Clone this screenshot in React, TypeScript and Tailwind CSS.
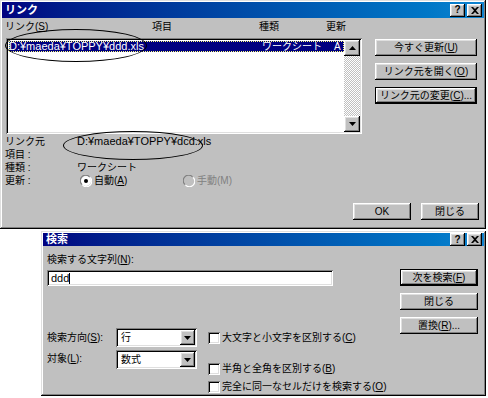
const raised =
  "bg-[#c0c0c0] shadow-[inset_-1px_-1px_#000,inset_1px_1px_#fff,inset_-2px_-2px_#808080,inset_2px_2px_#dfdfdf]";
const sunken =
  "bg-white shadow-[inset_1px_1px_#808080,inset_-1px_-1px_#fff,inset_2px_2px_#000,inset_-2px_-2px_#dfdfdf]";
const frame =
  "bg-[#c0c0c0] shadow-[inset_-1px_-1px_#000,inset_1px_1px_#dfdfdf,inset_-2px_-2px_#808080,inset_2px_2px_#fff]";

const TitleBar = ({ title }: { title: string }) => (
  <div className="h-[16px] flex items-center justify-between pl-[3px] pr-[2px] bg-linear-to-r from-[#000080] to-[#1084d0]">
    <span className="text-white font-bold text-[11px] leading-none">{title}</span>
    <div className="flex gap-[2px]">
      <div className={`w-[15px] h-[13px] flex items-center justify-center ${raised}`}>
        <span className="font-bold text-[10px] leading-none text-black">?</span>
      </div>
      <div className={`w-[15px] h-[13px] flex items-center justify-center ${raised}`}>
        <svg width="8" height="7" viewBox="0 0 8 7">
          <path d="M0 0h2l2 2 2-2h2L5 3.5 8 7H6L4 5 2 7H0l3-3.5z" fill="#000" />
        </svg>
      </div>
    </div>
  </div>
);

const Btn = ({
  children,
  className = "",
  def = false,
}: {
  children: React.ReactNode;
  className?: string;
  def?: boolean;
}) =>
  def ? (
    <div className={`border border-black ${className}`}>
      <div className={`h-full flex items-center justify-center whitespace-nowrap ${raised}`}>{children}</div>
    </div>
  ) : (
    <div className={`flex items-center justify-center whitespace-nowrap ${raised} ${className}`}>{children}</div>
  );

const Radio = ({ checked, disabled }: { checked?: boolean; disabled?: boolean }) => (
  <svg width="12" height="12" viewBox="0 0 12 12">
    <circle cx="6" cy="6" r="5" fill={disabled ? "#c0c0c0" : "#fff"} />
    <path d="M1.8 9.5A5.2 5.2 0 0 1 9.5 1.8" stroke="#808080" strokeWidth="1.2" fill="none" />
    <path d="M2.5 10.2A5.2 5.2 0 0 0 10.2 2.5" stroke="#fff" strokeWidth="1.2" fill="none" />
    {checked && <circle cx="6" cy="6" r="2" fill="#000" />}
  </svg>
);

const Check = () => <div className={`w-[12px] h-[12px] shrink-0 ${sunken}`} />;

const Arrow = ({ up }: { up?: boolean }) => (
  <svg width="7" height="4" viewBox="0 0 7 4">
    <path d={up ? "M0 4h7L3.5 0z" : "M0 0h7L3.5 4z"} fill="#000" />
  </svg>
);

const Select = ({ value }: { value: string }) => (
  <div className={`w-[81px] h-[19px] flex items-center p-[2px] ${sunken}`}>
    <span className="flex-1 pl-[3px] leading-none">{value}</span>
    <div className={`w-[15px] h-full flex items-center justify-center ${raised}`}>
      <Arrow />
    </div>
  </div>
);

export default function App() {
  return (
    <div className="relative w-[488px] h-[398px] bg-white overflow-hidden text-black text-[10px] font-['Liberation_Sans','Noto_Sans_CJK_JP',sans-serif]">
      {/* リンク dialog */}
      <div className={`w-[486px] h-[229px] p-[2px] flex flex-col ${frame}`}>
        <TitleBar title="リンク" />
        <div className="flex">
          <div className="w-[357px] pl-[3px]">
            <div className="h-[17px] flex items-center">
              <span className="w-[147px]">
                リンク(<u>S</u>)
              </span>
              <span className="w-[107px]">項目</span>
              <span className="w-[67px]">種類</span>
              <span>更新</span>
            </div>
            <div className={`ml-[1px] mt-[3px] w-[356px] h-[96px] p-[2px] flex ${sunken}`}>
              <div className="flex-1 pt-[1px] pl-[1px]">
                <div className="h-[11px] flex items-center bg-[#000080] text-white outline-1 outline-dotted outline-[#ffff80] -outline-offset-1">
                  <span className="w-[253px] text-[11px] leading-none">D:¥maeda¥TOPPY¥ddd.xls</span>
                  <span className="w-[72px] leading-none">ワークシート</span>
                  <span className="leading-none">A</span>
                </div>
              </div>
              <div className="w-[16px] flex flex-col bg-[repeating-conic-gradient(#c0c0c0_0_25%,#fff_0_50%)] bg-[length:2px_2px]">
                <div className={`h-[16px] flex items-center justify-center ${raised}`}>
                  <Arrow up />
                </div>
                <div className="flex-1" />
                <div className={`h-[16px] flex items-center justify-center ${raised}`}>
                  <Arrow />
                </div>
              </div>
            </div>
            <div className="mt-[1px] flex flex-col">
              <div className="h-[13px] flex items-center">
                <span className="w-[72px]">リンク元</span>
                <span className="text-[11px]">D:¥maeda¥TOPPY¥dcd.xls</span>
              </div>
              <div className="h-[13px] flex items-center">
                <span className="w-[72px]">項目 :</span>
              </div>
              <div className="h-[13px] flex items-center">
                <span className="w-[72px]">種類 :</span>
                <span>ワークシート</span>
              </div>
              <div className="h-[13px] flex items-center">
                <span className="w-[75px]">更新 :</span>
                <Radio checked />
                <span className="ml-[2px] w-[89px]">
                  自動(<u>A</u>)
                </span>
                <Radio disabled />
                <span className="ml-[2px] text-[#808080]">手動(M)</span>
              </div>
            </div>
          </div>
          <div className="ml-[16px] pt-[21px] flex flex-col gap-[7px]">
            <Btn className="w-[102px] h-[17px]">
              今すぐ更新(<u>U</u>)
            </Btn>
            <Btn className="w-[102px] h-[17px]">
              リンク元を開く(<u>O</u>)
            </Btn>
            <Btn def className="w-[102px] h-[17px]">
              リンク元の変更(<u>C</u>)...
            </Btn>
          </div>
        </div>
        <div className="mt-auto pb-[7px] pr-[5px] flex justify-end gap-[10px]">
          <Btn className="w-[58px] h-[17px]">OK</Btn>
          <Btn className="w-[58px] h-[17px]">閉じる</Btn>
        </div>
      </div>

      {/* 検索 dialog */}
      <div className={`mt-[2px] ml-[41px] w-[445px] h-[165px] p-[2px] flex flex-col ${frame}`}>
        <TitleBar title="検索" />
        <div className="flex">
          <div className="w-[290px] shrink-0 pl-[4px] pt-[7px]">
            <div className="h-[13px] flex items-center">
              検索する文字列(<u>N</u>):
            </div>
            <div className={`mt-[4px] w-[286px] h-[16px] flex items-center pl-[4px] ${sunken}`}>
              <span className="text-[11px] leading-none">ddd</span>
              <span className="w-px h-[11px] bg-black" />
            </div>
            <div className="mt-[42px] flex">
              <div className="shrink-0 flex flex-col gap-[3px]">
                <div className="flex items-center">
                  <span className="w-[69px]">
                    検索方向(<u>S</u>):
                  </span>
                  <Select value="行" />
                </div>
                <div className="flex items-start">
                  <span className="w-[69px] pt-[1px]">
                    対象(<u>L</u>):
                  </span>
                  <Select value="数式" />
                </div>
              </div>
              <div className="ml-[11px] pt-[2px] shrink-0 flex flex-col whitespace-nowrap">
                <div className="flex items-center gap-[2px]">
                  <Check />
                  <span>
                    大文字と小文字を区別する(<u>C</u>)
                  </span>
                </div>
                <div className="mt-[16px] flex items-center gap-[2px]">
                  <Check />
                  <span>
                    半角と全角を区別する(<u>B</u>)
                  </span>
                </div>
                <div className="mt-[3px] flex items-center gap-[2px]">
                  <Check />
                  <span>
                    完全に同一なセルだけを検索する(<u>O</u>)
                  </span>
                </div>
              </div>
            </div>
          </div>
          <div className="ml-[67px] pt-[23px] flex flex-col gap-[7px]">
            <Btn def className="w-[78px] h-[17px]">
              次を検索(<u>F</u>)
            </Btn>
            <Btn className="w-[78px] h-[17px]">閉じる</Btn>
            <Btn className="w-[78px] h-[17px]">
              置換(<u>R</u>)...
            </Btn>
          </div>
        </div>
      </div>

      {/* hand-drawn ellipses over the screenshot */}
      <div className="absolute left-[5px] top-[29px] w-[142px] h-[33px] rounded-[50%] border border-black" />
      <div className="absolute left-[63px] top-[131px] w-[140px] h-[29px] rounded-[50%] border border-black" />
    </div>
  );
}
